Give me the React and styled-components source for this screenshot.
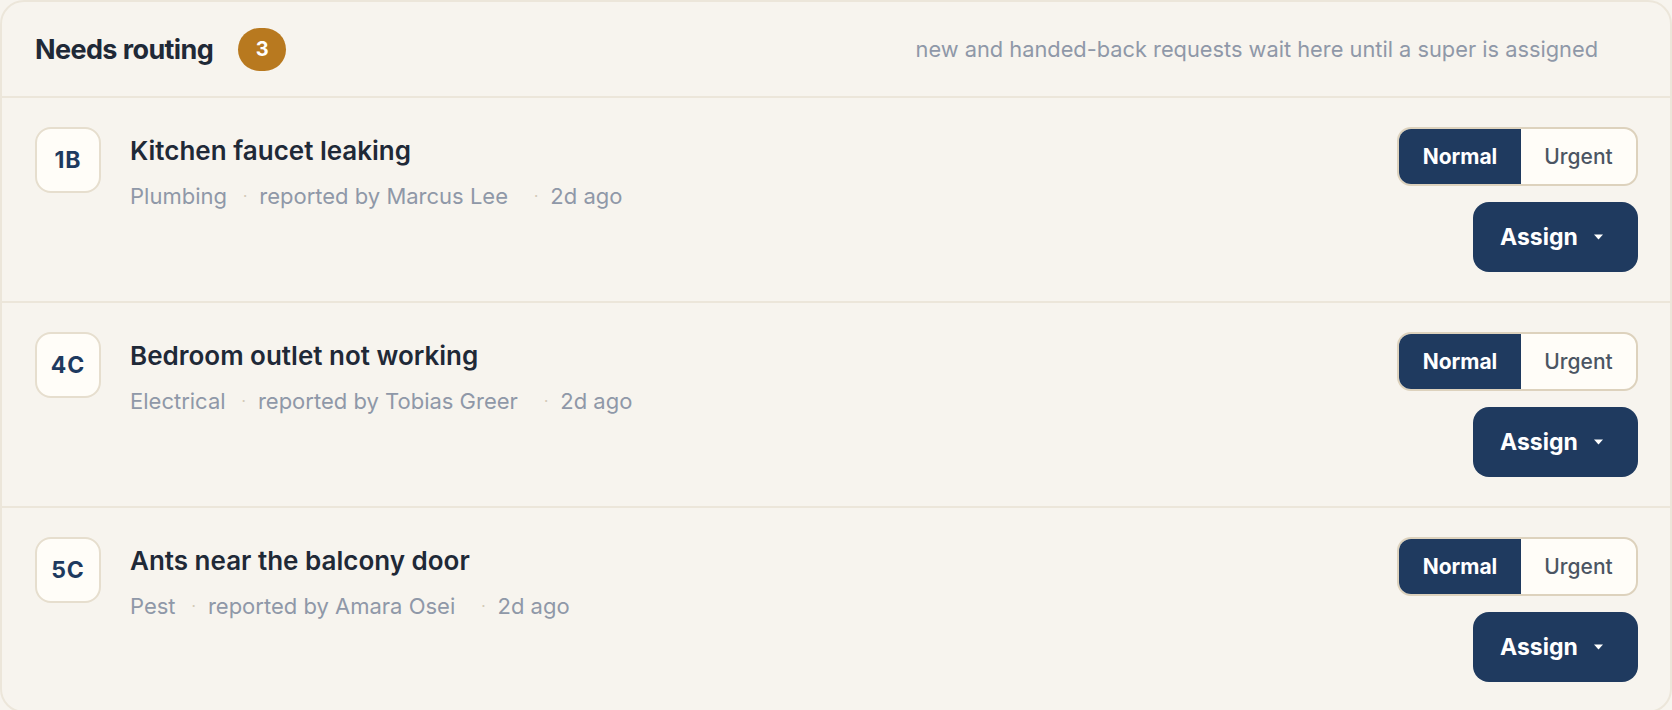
import React from "react"
import styled, { createGlobalStyle } from "styled-components"

const GlobalStyle = createGlobalStyle`
  html, body {
    margin: 0;
    padding: 0;
    background: #f7f4ee;
  }
  body {
    font-family: Inter, "Noto Sans", sans-serif;
  }
`

const Card = styled.section`
  box-sizing: border-box;
  width: 1672px;
  background: #f7f4ee;
  border: 2px solid #ece6da;
  border-radius: 24px;
  overflow: hidden;
`

const Header = styled.header`
  display: flex;
  align-items: center;
  height: 94px;
  padding: 0 72px 0 33px;
  border-bottom: 2px solid #ece6da;
`

const Title = styled.h2`
  margin: 0;
  font-size: 27px;
  font-weight: 700;
  color: #1f2937;
  letter-spacing: -0.6px;
`

const CountBadge = styled.span`
  display: inline-flex;
  align-items: center;
  justify-content: center;
  margin-left: 25px;
  width: 48px;
  height: 43px;
  border-radius: 22px;
  background: #b8791f;
  color: #ffffff;
  font-size: 20px;
  font-weight: 700;
`

const HeaderNote = styled.p`
  margin: 0 0 0 auto;
  font-size: 21.8px;
  color: #8f98a8;
`

const Row = styled.article`
  display: flex;
  align-items: flex-start;
  padding: 29px 32px 29px 33px;
  border-bottom: 2px solid #ece6da;

  &:last-child {
    border-bottom: 0;
  }
`

const UnitBox = styled.div`
  box-sizing: border-box;
  flex: 0 0 auto;
  display: flex;
  align-items: center;
  justify-content: center;
  width: 66px;
  height: 66px;
  border: 2px solid #e6dece;
  border-radius: 16px;
  background: #fffdf8;
  color: #1e3a5f;
  font-size: 23px;
  font-weight: 700;
  letter-spacing: 1px;
`

const Body = styled.div`
  flex: 1;
  margin-left: 29px;
  padding-top: 9px;
`

const RequestTitle = styled.h3`
  margin: 0;
  font-size: 26px;
  line-height: 30px;
  font-weight: 600;
  color: #1f2937;
`

const Meta = styled.div`
  display: flex;
  align-items: center;
  margin-top: 16px;
  font-size: 22px;
  line-height: 28px;
  color: #8f98a8;
`

const MetaPart = styled.span`
  margin-right: ${(props) => (props.$wide ? "10px" : "0")};
`

const Dot = styled.span`
  margin: 0 12px 0 16px;
  color: #d3cab8;
  font-size: 15px;
`

const Actions = styled.div`
  flex: 0 0 auto;
  display: flex;
  flex-direction: column;
  align-items: flex-end;
  gap: 16px;
`

const Segmented = styled.div`
  box-sizing: border-box;
  display: flex;
  height: 59px;
  border: 2px solid #ddd2bd;
  border-radius: 14px;
  overflow: hidden;
  background: #fffdf8;
`

const SegmentButton = styled.button`
  display: flex;
  align-items: center;
  justify-content: center;
  width: ${(props) => (props.$active ? "122px" : "115px")};
  padding: 0;
  border: 0;
  font-family: inherit;
  font-size: 21px;
  font-weight: ${(props) => (props.$active ? 700 : 500)};
  background: ${(props) => (props.$active ? "#1f3a5f" : "transparent")};
  color: ${(props) => (props.$active ? "#ffffff" : "#4b5563")};
  cursor: pointer;
`

const AssignButton = styled.button`
  box-sizing: border-box;
  display: flex;
  align-items: center;
  height: 70px;
  width: 165px;
  padding: 0 0 0 27px;
  border: 0;
  border-radius: 16px;
  background: #1f3a5f;
  color: #ffffff;
  font-family: inherit;
  font-size: 23px;
  font-weight: 700;
  cursor: pointer;
`

const Caret = styled.svg`
  margin-left: 16px;
`

const requests = [
  {
    unit: "1B",
    title: "Kitchen faucet leaking",
    category: "Plumbing",
    reporter: "Marcus Lee",
    age: "2d ago",
  },
  {
    unit: "4C",
    title: "Bedroom outlet not working",
    category: "Electrical",
    reporter: "Tobias Greer",
    age: "2d ago",
  },
  {
    unit: "5C",
    title: "Ants near the balcony door",
    category: "Pest",
    reporter: "Amara Osei",
    age: "2d ago",
  },
]

const RequestRow = ({ item }) => (
  <Row>
    <UnitBox>{item.unit}</UnitBox>
    <Body>
      <RequestTitle>{item.title}</RequestTitle>
      <Meta>
        <MetaPart>{item.category}</MetaPart>
        <Dot>·</Dot>
        <MetaPart $wide>reported by {item.reporter}</MetaPart>
        <Dot>·</Dot>
        <MetaPart>{item.age}</MetaPart>
      </Meta>
    </Body>
    <Actions>
      <Segmented>
        <SegmentButton $active>Normal</SegmentButton>
        <SegmentButton>Urgent</SegmentButton>
      </Segmented>
      <AssignButton>
        Assign
        <Caret width="9" height="6" viewBox="0 0 9 6">
          <path d="M0 0.5 H9 L4.5 5.5 Z" fill="#ffffff" />
        </Caret>
      </AssignButton>
    </Actions>
  </Row>
)

export default function App() {
  return (
    <>
      <GlobalStyle />
      <Card>
        <Header>
          <Title>Needs routing</Title>
          <CountBadge>{requests.length}</CountBadge>
          <HeaderNote>
            new and handed-back requests wait here until a super is assigned
          </HeaderNote>
        </Header>
        {requests.map((item) => (
          <RequestRow key={item.unit} item={item} />
        ))}
      </Card>
    </>
  )
}
